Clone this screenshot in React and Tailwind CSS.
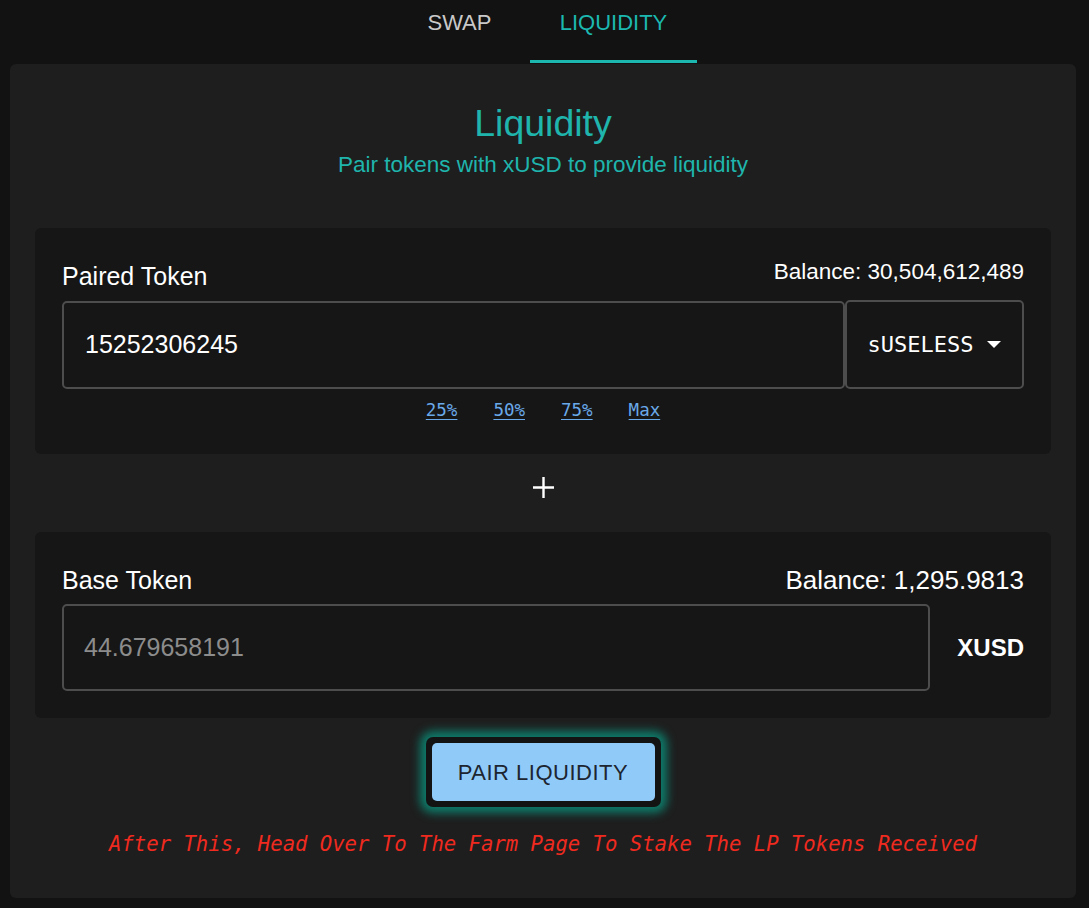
export default function App() {
  const sans = { fontFamily: '"Liberation Sans", Arial, sans-serif' };
  const mono = { fontFamily: '"DejaVu Sans Mono", "Liberation Mono", monospace' };
  return (
    <div className="min-h-[908px] w-full bg-[#121212] text-white" style={sans}>
      {/* Tabs */}
      <div className="flex h-[64px] justify-center pr-[3px]">
        <div className="flex">
          <div className="flex h-[63px] w-[141px] items-center justify-center pb-[22px] pt-[5px] text-[22px] leading-[26px] text-[#c9c9c9]">
            SWAP
          </div>
          <div className="flex h-[63px] w-[167px] flex-col">
            <div className="flex flex-1 items-center justify-center pb-[19px] pt-[5px] text-[22px] leading-[26px] text-[#1cb8b0]">
              LIQUIDITY
            </div>
            <div className="h-[3px] w-full bg-[#1cb8b0]" />
          </div>
        </div>
      </div>

      {/* Card */}
      <div className="ml-[10px] w-[1066px] rounded-[6px] bg-[#1e1e1e] px-[25px] pb-[42px] pt-[38px]">
        <div className="text-center text-[37.5px] leading-[43px] text-[#1fb5ad]">Liquidity</div>
        <div className="mt-[7px] text-center text-[22.5px] leading-[26px] text-[#1fb5ad]">
          Pair tokens with xUSD to provide liquidity
        </div>

        {/* Paired box */}
        <div className="mt-[50px] rounded-[6px] bg-[#161616] px-[27px] pb-[33px] pt-[31px]">
          <div className="flex items-start justify-between">
            <div className="pt-[3px] text-[25px] leading-[29px]">Paired Token</div>
            <div className="text-[22.5px] leading-[26px]">Balance: 30,504,612,489</div>
          </div>
          <div className="mt-[10px] flex">
            <div className="flex h-[88px] w-[783px] items-center rounded-[5px] border-2 border-[#4d4d4d] pl-[21px] text-[25px]">
              15252306245
            </div>
            <div className="-mt-[1px] flex h-[89px] flex-1 items-center justify-center gap-[14px] rounded-[5px] border-2 border-[#4d4d4d]">
              <span className="text-[22px]" style={mono}>sUSELESS</span>
              <svg width="14" height="8" viewBox="0 0 14 8" className="mt-[1px]">
                <path d="M0 0 L14 0 L7 7 Z" fill="#ffffff" />
              </svg>
            </div>
          </div>
          <div className="mt-[11px] flex justify-center gap-[36px] text-[17.5px] leading-[21px] text-[#6aa9e9]" style={mono}>
            <span className="underline underline-offset-[3px]">25%</span>
            <span className="underline underline-offset-[3px]">50%</span>
            <span className="underline underline-offset-[3px]">75%</span>
            <span className="underline underline-offset-[3px]">Max</span>
          </div>
        </div>

        {/* Plus */}
        <div className="flex justify-center pb-[33px] pt-[22px]">
          <svg width="23" height="23" viewBox="0 0 23 23">
            <path d="M11.5 1 V22 M1 11.5 H22" stroke="#ffffff" strokeWidth="2.4" />
          </svg>
        </div>

        {/* Base box */}
        <div className="rounded-[6px] bg-[#161616] px-[27px] pb-[27px] pt-[34px]">
          <div className="flex items-center justify-between">
            <div className="text-[25px] leading-[29px]">Base Token</div>
            <div className="text-[26px] leading-[29px]">Balance: 1,295.9813</div>
          </div>
          <div className="mt-[9px] flex items-center">
            <div className="flex h-[87px] w-[868px] items-center rounded-[5px] border-2 border-[#4d4d4d] pl-[20px] text-[25px] text-[#8c8c8c]">
              44.679658191
            </div>
            <div className="flex-1 text-right text-[24px] font-bold">XUSD</div>
          </div>
        </div>

        {/* Button */}
        <div className="mt-[19px] flex justify-center">
          <div className="rounded-[7px] bg-[#131313] p-[6px] shadow-[0_0_10px_6px_rgba(10,140,120,0.85)]">
            <div className="flex h-[58px] w-[223px] items-center justify-center rounded-[5px] bg-[#90caf9] text-[22px] tracking-[0.5px] text-[#1c2530]">
              PAIR LIQUIDITY
            </div>
          </div>
        </div>

        <div className="mt-[25px] text-center text-[20.6px] italic leading-[24px] text-[#f02a1f]" style={mono}>
          After This, Head Over To The Farm Page To Stake The LP Tokens Received
        </div>
      </div>
    </div>
  );
}
